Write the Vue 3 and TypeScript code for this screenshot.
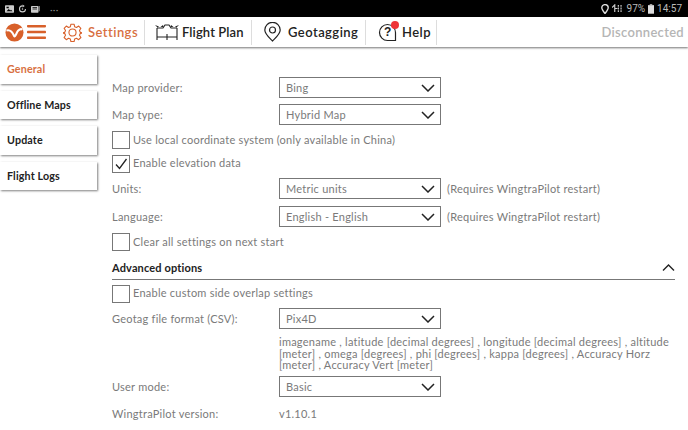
<script setup lang="ts">
import { ref } from 'vue'

const tabs = ['General', 'Offline Maps', 'Update', 'Flight Logs']
const activeTab = ref('General')
</script>

<template>
  <div class="page">
    <div class="status-bar">
      <div class="status-left">
        <svg width="9" height="8" viewBox="0 0 12 10"><rect x="0" y="0" width="12" height="10" rx="1" fill="#ccc" /><path d="M2 8l3-3 2 2 1-1 2 2z" fill="#000" /><rect x="2" y="2" width="3" height="2" fill="#000" /></svg>
        <svg width="9" height="9" viewBox="0 0 12 11" fill="none"><path d="M6 2a4 4 0 1 0 4 4" stroke="#ccc" stroke-width="1.4" /><path d="M6 0v4l3-2z" fill="#ccc" /><circle cx="6" cy="6" r="1" fill="#ccc" /></svg>
        <svg width="9" height="8" viewBox="0 0 12 10"><rect x="0" y="1" width="10" height="9" rx="1" fill="#ccc" /><path d="M2 3h6M2 5h6" stroke="#000" /><path d="M11 1v7" stroke="#ccc" /></svg>
        <span class="dots">···</span>
      </div>
      <div class="status-right">
        <svg width="8" height="10" viewBox="0 0 8 10" fill="none"><path d="M4 9.5C2 7 .8 5.500 .8 3.800a3.200 3.200 0 0 1 6.400 0C7.200 5.500 6 7 4 9.500z" stroke="#ddd" stroke-width="1.400" /></svg>
        <svg class="signal" width="10" height="9" viewBox="0 0 11 10" fill="none"><path d="M0 4l3-3v8M3 5h3" stroke="#ccc" stroke-width="1.300" /><path d="M7 1v8M10 1v8" stroke="#ccc" stroke-width="1.300" stroke-dasharray="2 1" /></svg>
        <span class="pct">97%</span>
        <svg width="6" height="10" viewBox="0 0 7 11"><rect x="2" y="0" width="3" height="1" fill="#ddd" /><rect x="0" y="1" width="7" height="10" fill="#ddd" /></svg>
        <span class="clock">14:57</span>
      </div>
    </div>

    <header class="top-bar">
      <div class="brand">
        <svg width="19" height="19" viewBox="0 0 20 20" fill="none">
          <circle cx="10" cy="10" r="9.500" fill="#d8602a" />
          <path d="M1.500 8C6 6.500 8 10 9.500 13.500c1 2.500 2.500-3.500 4.500-5.500 1.500-1.500 3-2 4.500-1" stroke="#fff" stroke-width="2.200" />
        </svg>
        <svg class="burger" width="19" height="14" viewBox="0 0 19 14" fill="#d8602a"><rect width="19" height="2.400" rx=".8" /><rect y="5.800" width="19" height="2.400" rx=".8" /><rect y="11.600" width="19" height="2.400" rx=".8" /></svg>
      </div>
      <div class="tool active">
        <svg width="19" height="19" viewBox="0 0 24 24" fill="none" stroke="#d8602a" stroke-width="1.400" stroke-linejoin="round"><circle cx="12" cy="12" r="4.500" /><path d="M10 1.500h4l.7 3.200 2.300 1 2.800-1.800 2.800 2.800-1.800 2.800 1 2.300 3.200.7v0l-3.200.7-1 2.300 1.800 2.800-2.800 2.800-2.800-1.800-2.300 1-.7 3.200h-4l-.7-3.200-2.300-1-2.800 1.800-2.800-2.800 1.800-2.800-1-2.300-3.200-.7v0l3.200-.7 1-2.300-1.800-2.800 2.800-2.800 2.800 1.800 2.300-1z" /></svg>
        <span>Settings</span>
      </div>
      <div class="tool plan">
        <svg width="24" height="16" viewBox="0 0 24 16" fill="none" stroke="#222" stroke-width="1.100"><path d="M2 4v12M22 4v12M2 4h6l2-3h4l2 3h6M2 13h20M12 10v6" /><path d="M0 1l4 1.500-1.500 1zM24 1l-4 1.500 1.500 1zM8 1l-2.500 2h3zM16 1l2.500 2h-3z" fill="#222" stroke="none" /></svg>
        <span>Flight Plan</span>
      </div>
      <div class="tool geo">
        <svg width="17" height="20" viewBox="0 0 17 20" fill="none" stroke="#222" stroke-width="1.200"><path d="M8.500 19C5 15.500 .8 12 .8 8a7.700 7.700 0 0 1 15.400 0c0 4-4.200 7.500-7.700 11z" /><circle cx="8.500" cy="8" r="3" /></svg>
        <span>Geotagging</span>
      </div>
      <div class="tool help">
        <span class="help-icon">
          <svg width="19" height="19" viewBox="0 0 19 19" fill="none" stroke="#222" stroke-width="1.200"><path d="M17.500 9.500a8 8 0 1 0-8 8h8z" /></svg>
          <b class="q">?</b>
          <i class="dot" />
        </span>
        <span>Help</span>
      </div>
      <div class="conn">Disconnected</div>
    </header>

    <div class="main">
      <nav class="side">
        <button
          v-for="tab in tabs"
          :key="tab"
          type="button"
          class="tab"
          :class="{ on: tab === activeTab }"
        >{{ tab }}</button>
      </nav>

      <section class="form">
        <div class="row">
          <label>Map provider:</label>
          <div class="select"><span>Bing</span><svg class="chev" width="14" height="8" viewBox="0 0 14 8"><path d="M1 1l6 6 6-6" /></svg></div>
        </div>
        <div class="row">
          <label>Map type:</label>
          <div class="select"><span>Hybrid Map</span><svg class="chev" width="14" height="8" viewBox="0 0 14 8"><path d="M1 1l6 6 6-6" /></svg></div>
        </div>
        <div class="check"><i class="box" /><span>Use local coordinate system (only available in China)</span></div>
        <div class="check">
          <i class="box"><svg width="16" height="16" viewBox="0 0 16 16" fill="none" stroke="#222" stroke-width="1.300"><path d="M3 8.500l3.500 4L13.500 3" /></svg></i>
          <span>Enable elevation data</span>
        </div>
        <div class="row">
          <label>Units:</label>
          <div class="select"><span>Metric units</span><svg class="chev" width="14" height="8" viewBox="0 0 14 8"><path d="M1 1l6 6 6-6" /></svg></div>
          <span class="note">(Requires WingtraPilot restart)</span>
        </div>
        <div class="row">
          <label>Language:</label>
          <div class="select"><span>English - English</span><svg class="chev" width="14" height="8" viewBox="0 0 14 8"><path d="M1 1l6 6 6-6" /></svg></div>
          <span class="note">(Requires WingtraPilot restart)</span>
        </div>
        <div class="check"><i class="box" /><span>Clear all settings on next start</span></div>

        <div class="advanced">
          <strong>Advanced options</strong>
          <svg width="13" height="7" viewBox="0 0 13 7" fill="none" stroke="#222" stroke-width="1.400"><path d="M1 6.500l5.500-5.500 5.500 5.500" /></svg>
        </div>

        <div class="check"><i class="box" /><span>Enable custom side overlap settings</span></div>
        <div class="row">
          <label>Geotag file format (CSV):</label>
          <div class="select"><span>Pix4D</span><svg class="chev" width="14" height="8" viewBox="0 0 14 8"><path d="M1 1l6 6 6-6" /></svg></div>
        </div>
        <p class="desc">imagename , latitude [decimal degrees] , longitude [decimal degrees] , altitude [meter] , omega [degrees] , phi [degrees] , kappa [degrees] , Accuracy Horz [meter] , Accuracy Vert [meter]</p>
        <div class="row">
          <label>User mode:</label>
          <div class="select"><span>Basic</span><svg class="chev" width="14" height="8" viewBox="0 0 14 8"><path d="M1 1l6 6 6-6" /></svg></div>
        </div>
        <div class="row">
          <label>WingtraPilot version:</label>
          <span>v1.10.1</span>
        </div>
      </section>
    </div>
  </div>
</template>

<style>
html,
body {
  margin: 0;
  background: #fff;
  overflow: hidden;
}
</style>

<style scoped>
.page {
  width: 688px;
  height: 430px;
  overflow: hidden;
  display: flex;
  flex-direction: column;
  font-family: Lato, "Open Sans", sans-serif;
  color: #7a7a7a;
  font-size: 11px;
  letter-spacing: 0.24px;
}

.status-bar {
  height: 17px;
  flex-shrink: 0;
  background: #000;
  display: flex;
  align-items: center;
  justify-content: space-between;
  padding: 0 6px 0 5px;
  color: #bbb;
}

.status-left,
.status-right {
  display: flex;
  align-items: center;
  gap: 3px;
}

.status-left {
  gap: 4px;
}

.dots {
  margin-left: 6px;
  font-size: 10px;
  color: #888;
}

.signal {
  margin-right: 2px;
}

.pct,
.clock {
  font-family: Roboto, sans-serif;
  font-size: 10px;
  letter-spacing: 0;
}

.top-bar {
  height: 30px;
  flex-shrink: 0;
  display: flex;
  align-items: center;
  background: #fff;
  box-shadow: 0 1px 2px rgba(0, 0, 0, 0.55);
  position: relative;
  z-index: 2;
  color: #222;
  font-size: 13px;
  font-weight: 600;
  letter-spacing: 0.45px;
  white-space: nowrap;
}

.brand {
  display: flex;
  align-items: center;
  gap: 3px;
  padding-left: 5px;
  width: 58px;
  box-sizing: border-box;
}

.tool {
  height: 25px;
  display: flex;
  align-items: center;
  gap: 6px;
  border-right: 1px solid #ddd;
  box-sizing: border-box;
}

.tool.active {
  width: 87px;
  padding-left: 5px;
  color: #d8703f;
}

.tool.plan {
  width: 107px;
  padding-left: 10px;
  gap: 3px;
  letter-spacing: 0.1px;
}

.tool.geo {
  width: 114px;
  padding-left: 12px;
  gap: 7px;
}

.tool.help {
  width: 71px;
  padding-left: 12px;
  gap: 5px;
}

.help-icon {
  position: relative;
  width: 19px;
  height: 19px;
  display: block;
}

.q {
  position: absolute;
  left: 6px;
  top: 2px;
  font-size: 12px;
  font-family: "Liberation Sans", sans-serif;
}

.dot {
  position: absolute;
  right: -2px;
  top: -2px;
  width: 8px;
  height: 8px;
  border-radius: 50%;
  background: #ee3338;
}

.conn {
  margin-left: auto;
  padding-right: 4px;
  color: #b5b5b5;
  letter-spacing: 0.3px;
}

.main {
  flex: 1;
  display: flex;
  min-height: 0;
}

.side {
  width: 97px;
  flex-shrink: 0;
  display: flex;
  flex-direction: column;
  gap: 7px;
  padding-top: 8px;
}

.tab {
  height: 28.500px;
  padding: 0 0 1px 7px;
  border: none;
  text-align: left;
  background: #fff;
  box-shadow: 1px 1px 2px rgba(0, 0, 0, 0.5);
  font: inherit;
  font-size: 10.700px;
  font-weight: 700;
  color: #222;
  letter-spacing: 0.15px;
}

.tab.on {
  color: #d8703f;
}

.form {
  flex: 1;
  padding: 30px 13px 0 15px;
  display: flex;
  flex-direction: column;
}

.row {
  display: flex;
  align-items: center;
  height: 21px;
  margin-bottom: 6px;
}

.check + .row {
  margin-bottom: 7px;
}

.row label {
  width: 167px;
  flex-shrink: 0;
}

.select {
  width: 162px;
  height: 21px;
  box-sizing: border-box;
  border: 1px solid #777;
  display: flex;
  align-items: center;
  justify-content: space-between;
  padding: 0 5px 0 6px;
  flex-shrink: 0;
}

.select span {
  padding-bottom: 1px;
}

.chev {
  fill: none;
  stroke: #222;
  stroke-width: 1.500;
}

.note {
  margin-left: 6px;
  white-space: nowrap;
}

.check {
  display: flex;
  align-items: center;
  gap: 3px;
  height: 18px;
  margin-bottom: 5.500px;
}

.check span {
  padding-bottom: 2px;
}

.box {
  width: 18px;
  height: 18px;
  box-sizing: border-box;
  border: 1px solid #777;
  display: flex;
  align-items: center;
  justify-content: center;
}

.advanced {
  margin-top: 3.500px;
  height: 20px;
  box-sizing: border-box;
  padding-bottom: 3px;
  display: flex;
  align-items: center;
  justify-content: space-between;
  border-bottom: 1px solid #777;
  margin-bottom: 5px;
}

.advanced strong {
  color: #222;
  font-weight: 700;
  letter-spacing: 0.15px;
}

.desc {
  margin: 0 0 5.500px 167px;
  line-height: 11.500px;
}
</style>
